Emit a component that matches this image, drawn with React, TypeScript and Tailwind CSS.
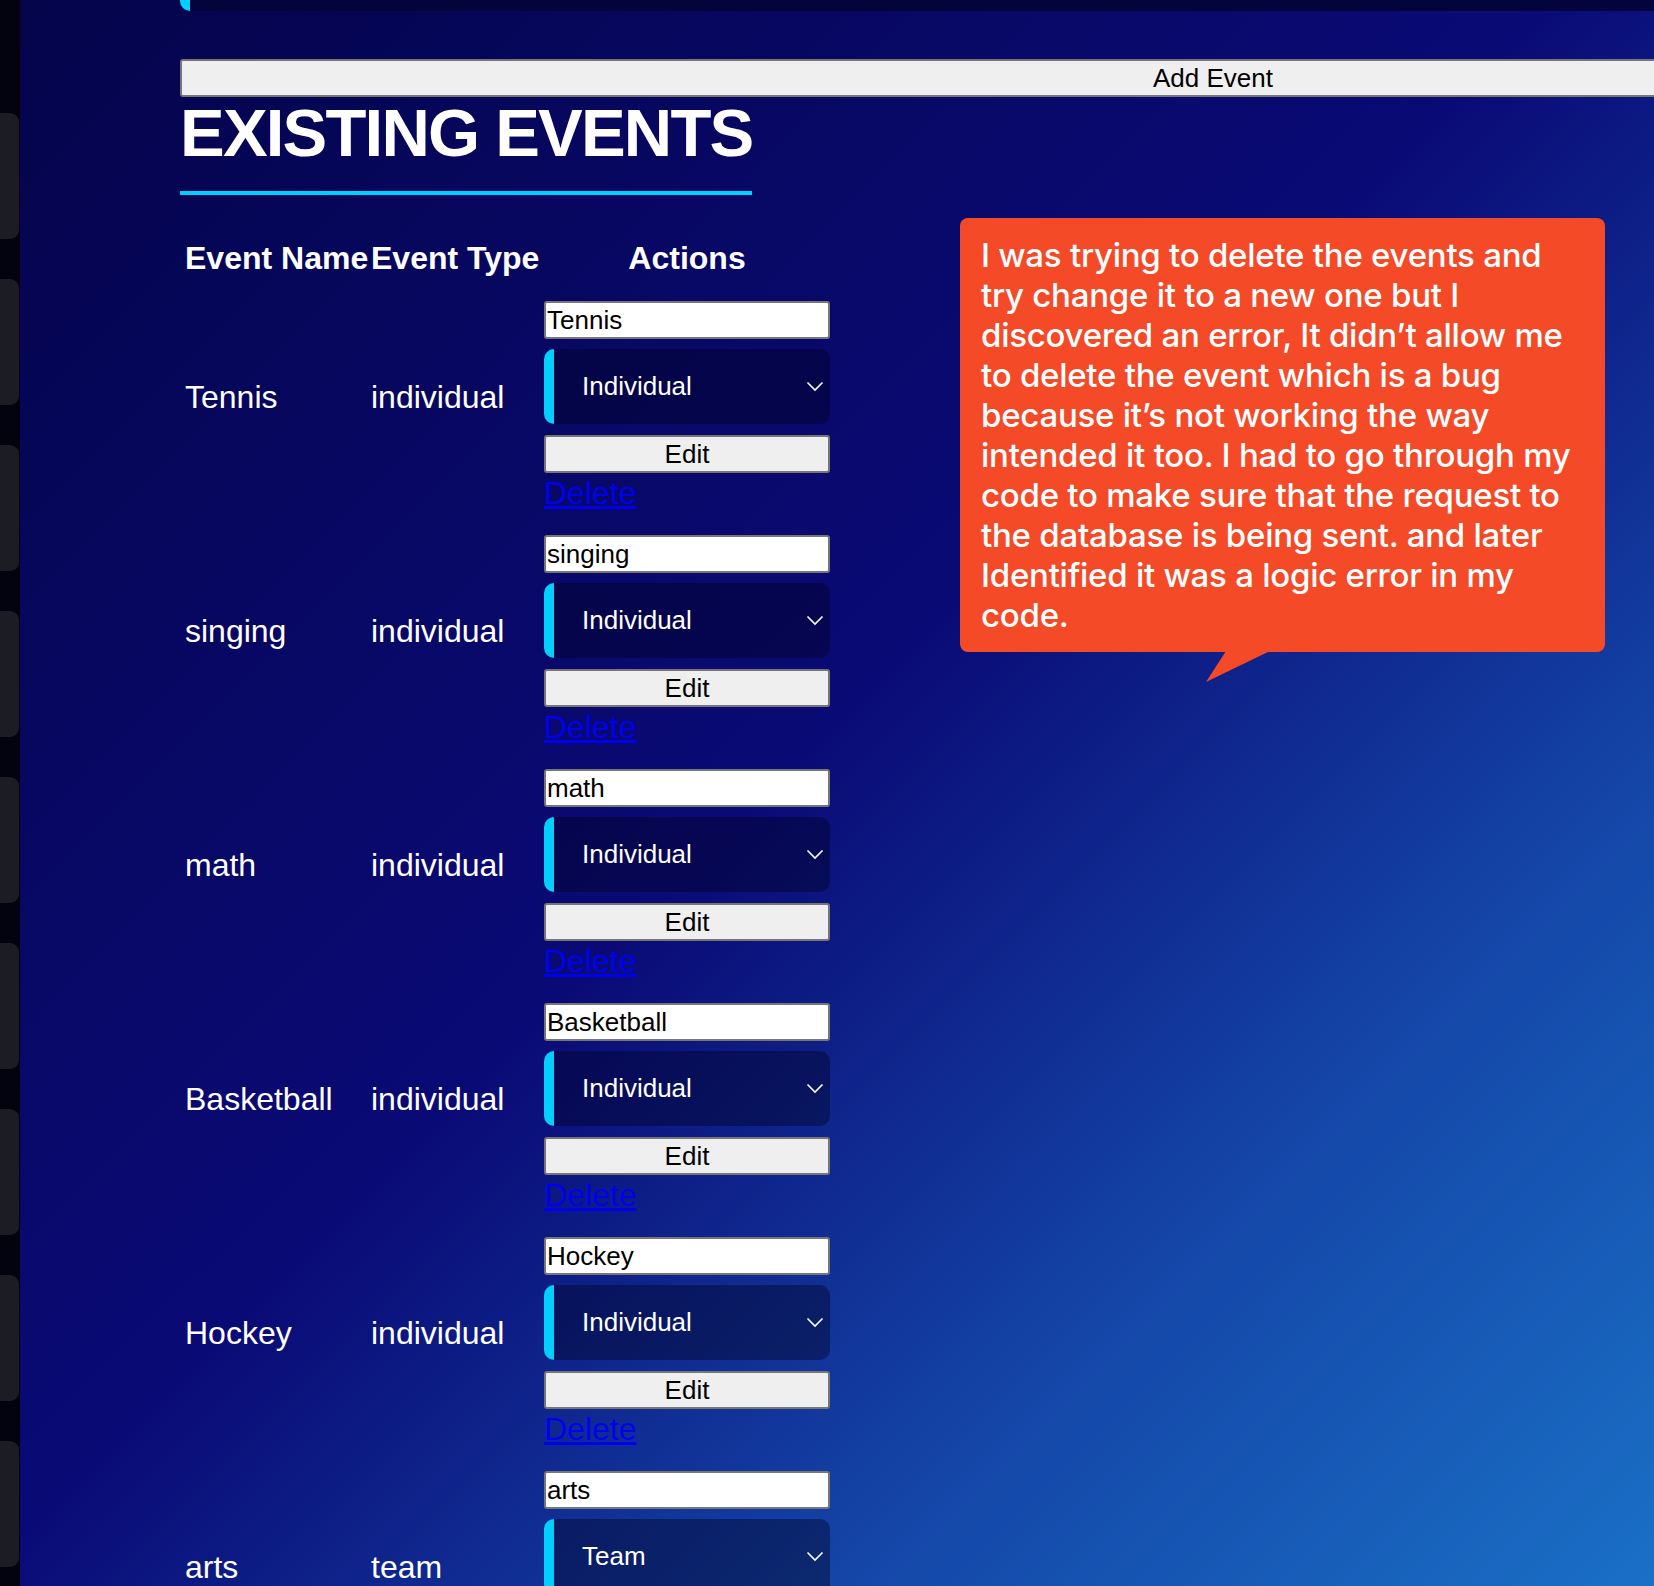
import React from 'react';

const events = [
  { name: 'Tennis', type: 'individual', option: 'Individual' },
  { name: 'singing', type: 'individual', option: 'Individual' },
  { name: 'math', type: 'individual', option: 'Individual' },
  { name: 'Basketball', type: 'individual', option: 'Individual' },
  { name: 'Hockey', type: 'individual', option: 'Individual' },
  { name: 'arts', type: 'team', option: 'Team' },
];

const note = [
  'I was trying to delete the events and',
  'try change it to a new one but I',
  'discovered an error, It didn\u2019t allow me',
  'to delete the event which is a bug',
  'because it\u2019s not working the way',
  'intended it too. I had to go through my',
  'code to make sure that the request to',
  'the database is being sent. and later',
  'Identified it was a logic error in my',
  'code.',
];

function Chevron() {
  return (
    <svg width="18" height="11" viewBox="0 0 18 11" fill="none">
      <polyline points="1.5,1.5 9,9 16.5,1.5" stroke="white" strokeWidth="1.6" />
    </svg>
  );
}

function EventRow({ name, type, option }: { name: string; type: string; option: string }) {
  return (
    <div className="grid grid-cols-[191px_173px_286px] items-center pt-[20px]">
      <div className="pb-[19px] pl-[5px]">{name}</div>
      <div className="pb-[19px]">{type}</div>
      <div className="flex flex-col">
        <input
          readOnly
          value={name}
          className="h-[38px] w-full rounded-[3px] border-2 border-[#767676] bg-white px-[1px] text-[26px] leading-none text-black outline-none"
        />
        <div className="mt-[10px] flex h-[75px] items-center justify-between rounded-[10px] border-l-[10px] border-[#00cfff] bg-[rgba(0,0,30,0.4)] pl-[28px] pr-[6px] text-[26px] text-white">
          <span>{option}</span>
          <Chevron />
        </div>
        <button className="mt-[11px] h-[38px] w-full rounded-[3px] border-2 border-[#767676] bg-[#efefef] text-[26px] leading-none text-black">
          Edit
        </button>
        <a href="#" className="mt-[2px] w-fit text-[32px] leading-[37px] text-[#0000ee] underline">
          Delete
        </a>
      </div>
    </div>
  );
}

export default function App() {
  return (
    <div className="relative flex h-[1586px] w-full overflow-hidden bg-[linear-gradient(135deg,#04044a_0%,#0a0a76_48%,#1446a8_75%,#1a70c6_100%)] font-['Liberation_Sans',Arial,sans-serif]">
      <aside className="flex w-[20px] shrink-0 flex-col gap-[40px] bg-[#03030f] pt-[113px]">
        {[...Array(10)].map((_, i) => (
          <div key={i} className="h-[126px] w-[19px] shrink-0 rounded-r-[9px] bg-[#1c1c25]" />
        ))}
      </aside>

      <main className="flex-1 pl-[160px]">
        <div className="h-[11px] rounded-bl-[10px] border-l-[10px] border-[#00cfff] bg-[#04043c]" />

        <button className="mt-[48px] block h-[38px] w-[2066px] rounded-[3px] border-2 border-[#767676] bg-[#efefef] text-[26px] leading-none text-black">
          Add Event
        </button>

        <h1 className="mt-[2px] text-[67px] font-bold leading-[67px] tracking-[-1.8px] text-white">EXISTING EVENTS</h1>
        <div className="mt-[25px] h-[4px] w-[572px] bg-[#00cfff]" />

        <div className="mt-[45px] flex flex-col gap-[3px] text-[32px] leading-[37px] text-white">
          <div className="mb-[1px] grid grid-cols-[191px_173px_286px] font-bold">
            <div className="pl-[5px]">Event Name</div>
            <div>Event Type</div>
            <div className="text-center">Actions</div>
          </div>
          {events.map((ev) => (
            <EventRow key={ev.name} {...ev} />
          ))}
        </div>
      </main>

      <div className="absolute left-[960px] top-[218px] h-[434px] w-[645px] rounded-[8px] bg-[#f54a28] pl-[21px] pt-[17px] font-['Inter',sans-serif] text-[33px] font-medium leading-[40px] tracking-[-0.25px] text-white">
        {note.map((line) => (
          <div key={line} className="whitespace-nowrap">
            {line}
          </div>
        ))}
      </div>
      <svg className="absolute left-[1200px] top-[651px]" width="75" height="34" viewBox="0 0 75 34">
        <polygon points="26,0 70,0 6,31" fill="#f54a28" />
      </svg>
    </div>
  );
}
